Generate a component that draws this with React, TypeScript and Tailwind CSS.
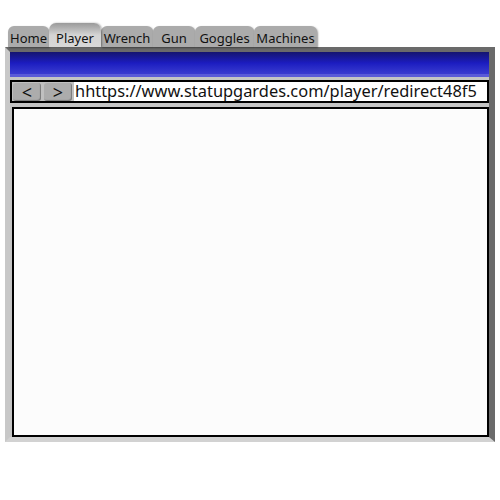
import React from "react";

const tabs = [
  { label: "Home", w: "w-[41px]" },
  { label: "Player", w: "w-[52px]", active: true },
  { label: "Wrench", w: "w-[52px]" },
  { label: "Gun", w: "w-[42px]" },
  { label: "Goggles", w: "w-[59px]" },
  { label: "Machines", w: "w-[63px]" },
];

export default function App() {
  return (
    <div className="w-[500px] h-[500px] bg-white pt-[23px]" style={{ fontFamily: '"Noto Sans", "DejaVu Sans", sans-serif' }}>
      <div className="flex items-end h-[24px] pl-[8px]">
        {tabs.map((t) =>
          t.active ? (
            <div
              key={t.label}
              className={`${t.w} h-[24px] rounded-t-[7px] bg-gradient-to-b from-[#9a9a9a] via-[#d4d4d4] to-[#d8d8d8] flex items-end justify-center text-[13px] leading-[18px] text-[#111] shadow-[1px_0_2px_rgba(0,0,0,0.35)] relative z-10`}
            >
              {t.label}
            </div>
          ) : (
            <div
              key={t.label}
              className={`${t.w} h-[21px] rounded-t-[6px] bg-[#ababab] flex items-end justify-center text-[13px] leading-[18px] text-[#111] shadow-[1px_1px_2px_rgba(0,0,0,0.4)]`}
            >
              {t.label}
            </div>
          )
        )}
      </div>
      <div className="ml-[5px] w-[490px] h-[395px] border-t-[5px] border-t-[#6a6a6a] border-l-[5px] border-l-[#c8c8c8] border-r-[6px] border-r-[#6a6a6a] border-b-[5px] border-b-[#d2d2d2] bg-[#c4c4c4] flex flex-col">
        <div className="h-[25px] bg-gradient-to-b from-[#141470] via-[#1c1cc0] to-[#3a3ad0] border-b-[3px] border-b-[#5a5ad8]" />
        <div className="mt-[3px] h-[23px] border-[2px] border-black bg-[#c0c0c0] flex items-center pl-[1px]">
          <div className="w-[28px] h-[18px] rounded-[3px] bg-[#acacac] shadow-[inset_-1px_-1px_1px_rgba(0,0,0,0.3)] flex items-center justify-center text-[18px] leading-none text-[#111]">&lt;</div>
          <div className="ml-[3px] w-[28px] h-[18px] rounded-[3px] bg-[#acacac] shadow-[inset_-1px_-1px_1px_rgba(0,0,0,0.3)] flex items-center justify-center text-[18px] leading-none text-[#111]">&gt;</div>
          <div className="ml-[2px] flex-1 h-full bg-white flex items-center pl-[1px] text-[16.4px] text-[#111] whitespace-nowrap">
            hhttps://www.statupgardes.com/player/redirect48f5
          </div>
        </div>
        <div className="mt-[4px] ml-[2px] flex-1 border-[2px] border-black bg-[#fcfcfc]" />
      </div>
    </div>
  );
}
